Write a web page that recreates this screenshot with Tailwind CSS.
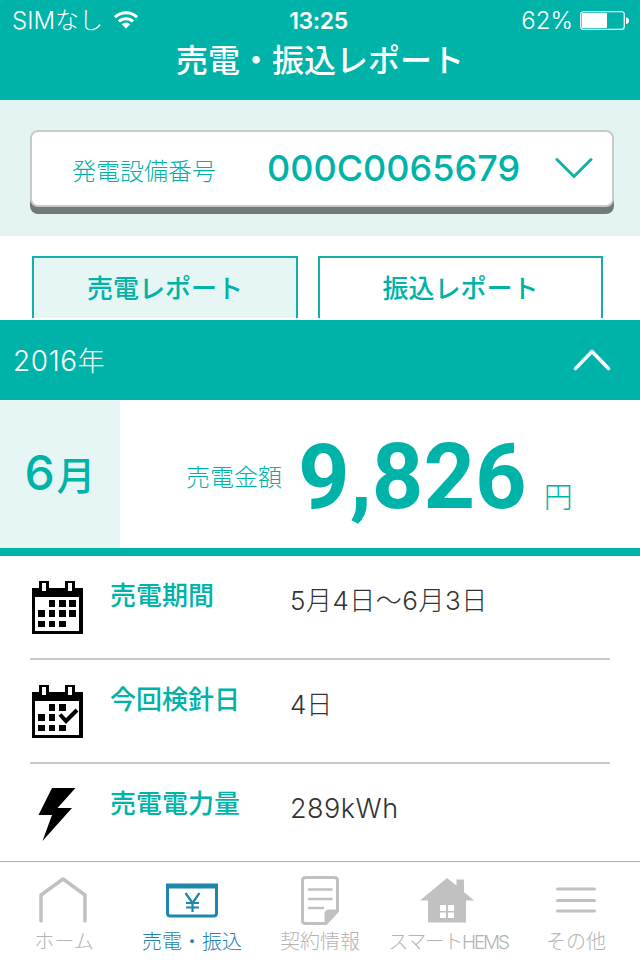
<!DOCTYPE html>
<html lang="ja">
<head>
    <meta charset="UTF-8">
    <meta name="viewport" content="width=device-width, initial-scale=1.0">
    <title>売電・振込レポート</title>
    <script src="https://cdn.jsdelivr.net/npm/@tailwindcss/browser@4"></script>
</head>
<body class="bg-white w-[640px] h-[960px] overflow-hidden flex flex-col font-['Noto_Sans_CJK_JP',sans-serif] text-[#00b3a8] whitespace-nowrap">
    <header class="h-[100px] shrink-0 bg-[#00b3a8] text-white">
        <!-- Status bar -->
        <div class="h-10 grid grid-cols-3 items-center pl-3 pr-[11px] leading-none">
            <div class="flex items-center font-light">
                <span class="w-[90px] pt-0.5 text-[24px] font-['Inter','Noto_Sans_CJK_JP',sans-serif]">SIMなし</span>
                <svg class="ml-3 w-6 h-[18px]" viewBox="0 0 24 18" fill="none" stroke="#fff" stroke-width="3">
                    <path d="M1 6.2a15.8 15.8 0 0 1 22 0M5 10.5a10 10 0 0 1 14 0" />
                    <path d="M12 17.5l-4.3-4.2a6.2 6.2 0 0 1 8.6 0z" fill="#fff" stroke="none" />
                </svg>
            </div>
            <div class="pt-0.5 pr-1 text-center text-[23px] font-semibold font-['Inter',sans-serif] tracking-[-0.4px]">13:25</div>
            <div class="flex items-center justify-end">
                <span class="pt-0.5 text-[24px] font-light font-['Inter',sans-serif]">62%</span>
                <svg class="ml-1.5 w-[50px] h-5 translate-x-px translate-y-px" viewBox="0 0 50 20" fill="none">
                    <rect x=".75" y=".75" width="43.5" height="17.5" rx="2.5" stroke="#fff" stroke-width="1.2" />
                    <rect x="2" y="2" width="25" height="15" rx="1" fill="#fff" />
                    <path d="M46 6.5c4 0 4 6.5 0 6.5z" fill="#fff" />
                </svg>
            </div>
        </div>
        <h1 class="mt-0.5 text-center text-[32px] leading-none font-medium">売電・振込レポート</h1>
    </header>

    <!-- Facility picker -->
    <section class="h-[136px] shrink-0 bg-[#e4f4f2] pt-[30px] px-[30px] pr-[26px]">
        <button class="w-full h-[77px] flex items-center bg-white border-2 border-[#c8caca] rounded-lg shadow-[0_7px_0_#717a7a] pl-10 pr-[19px] leading-none">
            <span class="w-[195px] pt-0.5 text-left text-[24px] font-light">発電設備番号</span>
            <span class="-mt-0.5 text-[36px] font-medium font-['Inter',sans-serif]">000C0065679</span>
            <svg class="ml-auto w-[38px] h-6" viewBox="0 0 38 24" fill="none" stroke="#14afa5" stroke-width="3" stroke-linecap="round" stroke-linejoin="round">
                <path d="M2 2.500l17 17L36 2.500" />
            </svg>
        </button>
    </section>

    <nav class="h-[84px] shrink-0 flex gap-5 pt-5 pb-0.5 pl-8 pr-[37px] text-[26px] font-medium leading-none">
        <div class="w-[266px] pt-4 text-center bg-[#e5f6f4] border-2 border-b-0 border-[#14afa5]">売電レポート</div>
        <div class="flex-1 pt-4 text-center border-2 border-b-0 border-[#14afa5]">振込レポート</div>
    </nav>

    <div class="h-20 shrink-0 flex items-center justify-between bg-[#00b3a8] text-white pl-[13px] pr-[29px]">
        <span class="pt-px text-[28px] leading-none font-light font-['Inter','Noto_Sans_CJK_JP',sans-serif] tracking-[0.6px]">2016<span class="text-[27px]">年</span></span>
        <svg class="w-[38px] h-6" viewBox="0 0 38 24" fill="none" stroke="#fff" stroke-width="3.5" stroke-linecap="round" stroke-linejoin="round">
            <path d="M2.5 20.500L19 3.500l16.500 17" />
        </svg>
    </div>

    <section class="h-[156px] shrink-0 flex border-b-8 border-[#00b3a8] leading-none">
        <div class="w-[120px] bg-[#e5f6f4] flex items-baseline justify-center pt-[49px] text-[39px] font-medium"><span class="mr-0.5 font-['Inter',sans-serif] font-medium text-[48px]">6</span>月</div>
        <div class="flex items-baseline pl-[66px] pt-[33px]">
            <span class="text-[24px] font-light -translate-y-[22px]">売電金額</span>
            <span class="ml-4 text-[90px] font-bold font-['Roboto',sans-serif]">9,826</span>
            <span class="ml-[17px] text-[29px] font-light">円</span>
        </div>
    </section>

    <main class="flex-1 min-h-0 overflow-hidden px-[30px] leading-none">
        <div class="h-[104px] flex border-b-2 border-[#c8c8c8]">
            <svg class="w-[52px] h-[53px] mt-[25px] ml-0.5" viewBox="0 0 52 53" shape-rendering="crispEdges">
                <path d="M0 7h51v46H0z" />
                <path d="M3 16h44v34H3z" fill="#fff" />
                <path d="M7 0h10v12H7zM33 0h10v12H33z" />
                <path d="M10 2h4v8h-4zM36 2h4v8h-4z" fill="#fff" />
                <path d="M17 19h6v7h-6zM27 19h7v7h-7zM37 19h7v7h-7zM6 29h7v7H6zM17 29h6v7h-6zM27 29h7v7h-7zM37 29h7v7h-7zM6 40h7v6H6zM17 40h6v6h-6zM27 40h7v6h-7z" />
            </svg>
            <span class="w-[180px] ml-[26px] mt-[25px] text-[26px] font-medium">売電期間</span>
            <span class="mt-8 text-[26px] font-light text-[#333] font-['Inter','Noto_Sans_CJK_JP',sans-serif] tracking-[0.5px]">5月4日〜6月3日</span>
        </div>
        <div class="h-[104px] flex border-b-2 border-[#c8c8c8]">
            <svg class="w-[52px] h-[53px] mt-[25px] ml-0.5" viewBox="0 0 52 53" shape-rendering="crispEdges">
                <path d="M0 7h51v46H0z" />
                <path d="M3 16h44v34H3z" fill="#fff" />
                <path d="M7 0h10v12H7zM33 0h10v12H33z" />
                <path d="M10 2h4v8h-4zM36 2h4v8h-4z" fill="#fff" />
                <path d="M17 19h6v7h-6zM27 19h7v7h-7zM6 29h7v7H6zM17 29h6v7h-6zM6 40h7v6H6zM17 40h6v6h-6zM27 40h7v6h-7z" />
                <path d="M28 29.500l6 6.500L45 25" fill="none" stroke="#fff" stroke-width="6" shape-rendering="auto" />
                <path d="M28 29.500l6 6.500L45 25" fill="none" stroke="#000" stroke-width="4" shape-rendering="auto" />
            </svg>
            <span class="w-[180px] ml-[26px] mt-[25px] text-[26px] font-medium">今回検針日</span>
            <span class="mt-8 text-[26px] font-light text-[#333] font-['Inter','Noto_Sans_CJK_JP',sans-serif]">4日</span>
        </div>
        <div class="h-[104px] flex">
            <svg class="w-[52px] h-[53px] mt-6 ml-0.5" viewBox="0 0 52 53">
                <path d="M20 0h23.500L25.500 20h14.500L10.500 53 20 27H6.500z" />
            </svg>
            <span class="w-[180px] ml-[26px] mt-[25px] text-[26px] font-medium">売電電力量</span>
            <span class="mt-[31px] text-[27px] font-light text-[#333] font-['Inter','Noto_Sans_CJK_JP',sans-serif] tracking-[0.5px]">289kWh</span>
        </div>
    </main>

    <!-- Tab bar -->
    <footer class="h-[99px] shrink-0 grid grid-cols-5 border-t border-[#adadad] text-center text-[20px] font-light leading-none text-[#b4b4b4]">
        <a class="flex flex-col items-center pt-3.5">
            <svg class="w-[50px] h-[50px] -translate-x-px" viewBox="0 0 50 50" fill="none" stroke="#c1c1c1" stroke-width="3.500" stroke-linecap="round" stroke-linejoin="round">
                <path d="M3 45V19L25 3l22 16v26" />
            </svg>
            <span class="mt-[5px]">ホーム</span>
        </a>
        <a class="flex flex-col items-center pt-3.5 text-[#1e86ab]">
            <svg class="w-[54px] h-[50px]" viewBox="0 0 54 50" fill="none" stroke="#1c86ad">
                <path d="M2.500 8v29q0 3 3 3h43q3 0 3-3V8" stroke-width="3" />
                <path d="M1 10h52" stroke-width="5" />
                <path d="M20.500 17l7 10 7-10M27.500 27v9M21 27h13M21 31.500h13" stroke-width="2.200" />
            </svg>
            <span class="mt-[5px]">売電・振込</span>
        </a>
        <a class="flex flex-col items-center pt-3.5">
            <svg class="w-10 h-[50px]" viewBox="0 0 40 50" fill="none" stroke="#c1c1c1" stroke-width="3" stroke-linecap="round" stroke-linejoin="round">
                <path d="M26 47.500H5.500q-3 0-3-3v-40q0-3 3-3h29q3 0 3 3V35z" />
                <path d="M26 47V38q0-3 3-3h8z" fill="#c1c1c1" />
                <path d="M9 13.500h22.500M9 23h22.500M9 32h14" stroke-width="2.500" />
            </svg>
            <span class="mt-[5px]">契約情報</span>
        </a>
        <a class="flex flex-col items-center pt-3.5">
            <svg class="w-[54px] h-[50px] -translate-x-px" viewBox="0 0 54 50">
                <path d="M27 2l9.500 7.500V3.500h7.500v12.500l10 8.500h-8v22H8v-22H0z" fill="#c1c1c1" />
                <path d="M20 29h6v6h-6zM28 29h6v6h-6zM20 36.500h6v5.500h-6zM28 36.500h6v5.500h-6z" fill="#fff" />
            </svg>
            <span class="mt-[5px] tracking-[-1.4px]">スマート<span class="font-['Inter',sans-serif] text-[19px] tracking-[-2.2px]">HEMS</span></span>
        </a>
        <a class="flex flex-col items-center pt-3.5">
            <svg class="w-10 h-[50px]" viewBox="0 0 40 50" stroke="#c1c1c1" stroke-width="3.200" stroke-linecap="round">
                <path d="M1.600 13h36.800M1.600 24.500h36.800M1.600 35h36.800" />
            </svg>
            <span class="mt-[5px]">その他</span>
        </a>
    </footer>
</body>
</html>
